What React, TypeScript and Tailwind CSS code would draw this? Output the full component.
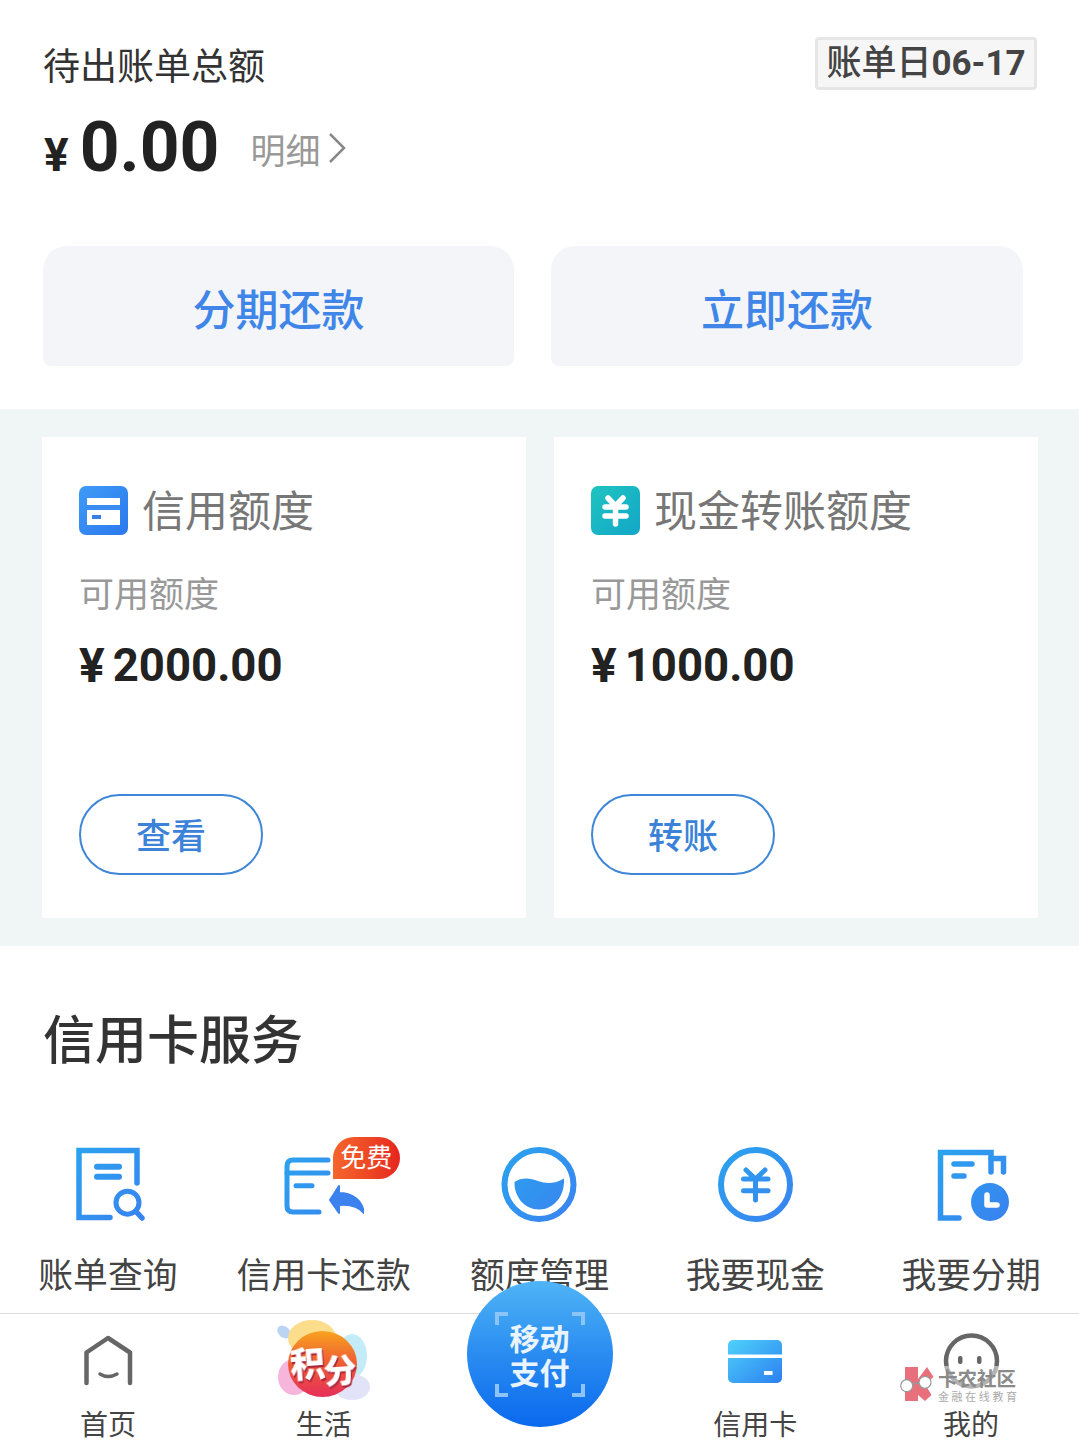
import type { ReactNode } from "react";

const NUM_FONT = "font-['Roboto','Noto_Sans_CJK_SC',sans-serif]";

function BlueGrad({ id }: { id: string }) {
  return (
    <defs>
      <linearGradient id={id} gradientUnits="userSpaceOnUse" x1="0" y1="0" x2="80" y2="80">
        <stop offset="0" stopColor="#2aa5ee" />
        <stop offset="1" stopColor="#3a80f0" />
      </linearGradient>
    </defs>
  );
}

function BillIcon() {
  return (
    <svg width="80" height="80" viewBox="0 0 80 80" fill="none">
      <BlueGrad id="g1" />
      <g stroke="url(#g1)" strokeWidth="5.5">
        <path d="M42 71.5H11V4.5H69V37" strokeLinecap="round" />
        <path d="M29 20.7H51M29 30.7H51" strokeWidth="6" strokeLinecap="round" />
        <circle cx="59.5" cy="56.7" r="11.5" strokeWidth="5" />
        <path d="M68 65.5L74 72" strokeLinecap="round" />
      </g>
    </svg>
  );
}

function RepayIcon() {
  return (
    <svg width="80" height="80" viewBox="0 0 80 80" fill="none">
      <BlueGrad id="g2" />
      <g stroke="url(#g2)" strokeWidth="5" strokeLinecap="round">
        <path d="M44 14H9Q3 14 3 20V60Q3 66 9 66H35" />
        <path d="M3 27H44" />
        <path d="M12 39.7H28" />
      </g>
      <path
        d="M46 54L55 40V47C68 47 78 54 80 67C74 60 66 58 55 59V67Z"
        fill="#3b82ee"
        stroke="#3b82ee"
        strokeWidth="2"
        strokeLinejoin="round"
      />
    </svg>
  );
}

function WaterIcon() {
  return (
    <svg width="80" height="80" viewBox="0 0 80 80" fill="none">
      <BlueGrad id="g3" />
      <circle cx="40" cy="38.5" r="34.5" stroke="url(#g3)" strokeWidth="6" />
      <path
        d="M15.5 36C23 31 31 32 39 35S56 38 65 32.5C66 50 55 63.5 40 63.5C26 63.5 15 51 15.5 36Z"
        fill="url(#g3)"
      />
    </svg>
  );
}

function CashIcon() {
  return (
    <svg width="80" height="80" viewBox="0 0 80 80" fill="none">
      <BlueGrad id="g4" />
      <circle cx="40.5" cy="38.5" r="34.5" stroke="url(#g4)" strokeWidth="6" />
      <path
        d="M31 24L40.5 33L50 24M28.5 33H53M28.5 44.7H53M40.5 33V54"
        stroke="url(#g4)"
        strokeWidth="5"
        strokeLinecap="round"
        strokeLinejoin="round"
      />
    </svg>
  );
}

function InstalmentIcon() {
  return (
    <svg width="80" height="80" viewBox="0 0 80 80" fill="none">
      <BlueGrad id="g5" />
      <g stroke="url(#g5)" strokeWidth="5.5" strokeLinecap="round">
        <path d="M28 72H9.5V6.5H60V26" />
        <path d="M60 12.5H72.5V26" />
        <path d="M23 18H41M23 30H33" />
      </g>
      <circle cx="59" cy="56" r="19" fill="url(#g5)" />
      <path d="M56 49V59H66" stroke="#fff" strokeWidth="5.5" strokeLinejoin="round" strokeLinecap="round" />
    </svg>
  );
}

function HomeIcon() {
  return (
    <svg width="60" height="60" viewBox="0 0 60 60" fill="none">
      <path
        d="M8.5 50V19.5L30 5L52 19.5V50"
        stroke="#666"
        strokeWidth="4.5"
        strokeLinecap="round"
        strokeLinejoin="round"
      />
      <path d="M22 41Q30 46 39 41" stroke="#666" strokeWidth="3.5" strokeLinecap="round" />
    </svg>
  );
}

function PointsIcon() {
  return (
    <svg className="overflow-visible" width="92" height="80" viewBox="0 0 92 80" fill="none">
      <defs>
        <linearGradient id="pts" x1="0.5" y1="0" x2="0.5" y2="1">
          <stop offset="0" stopColor="#f8a31f" />
          <stop offset="0.5" stopColor="#ef5a35" />
          <stop offset="1" stopColor="#e62f5a" />
        </linearGradient>
      </defs>
      <ellipse cx="6" cy="9" rx="7.5" ry="5.5" fill="#bcd4f4" transform="rotate(40 6 9)" />
      <ellipse cx="34" cy="15" rx="24" ry="18" fill="#fbdd8c" />
      <ellipse cx="74" cy="33" rx="15" ry="22" fill="#c4ecf8" />
      <ellipse cx="16" cy="54" rx="16" ry="18" fill="#f6b6dc" />
      <ellipse cx="74" cy="64" rx="18" ry="13" fill="#e2e2f8" />
      <ellipse cx="44.5" cy="41" rx="34.5" ry="33" fill="url(#pts)" />
      <text
        x="12"
        y="53"
        fill="#fff"
        fontSize="35"
        fontWeight="900"
        fontFamily="'Noto Sans CJK SC',sans-serif"
        transform="rotate(-4 44 40)"
        className="drop-shadow-[1px_2px_0_#a8243a]"
      >
        积
      </text>
      <text
        x="45"
        y="61"
        fill="#fff"
        fontSize="33"
        fontWeight="900"
        fontFamily="'Noto Sans CJK SC',sans-serif"
        transform="rotate(-4 44 40)"
        className="drop-shadow-[1px_2px_0_#a8243a]"
      >
        分
      </text>
    </svg>
  );
}

function CardIcon() {
  return (
    <svg width="60" height="60" viewBox="0 0 60 60" fill="none">
      <defs>
        <linearGradient id="cardg" x1="0" y1="0" x2="1" y2="1">
          <stop offset="0" stopColor="#4fd2fb" />
          <stop offset="1" stopColor="#2b7ff0" />
        </linearGradient>
      </defs>
      <rect x="3" y="7" width="54" height="43" rx="5" fill="url(#cardg)" />
      <rect x="3" y="21.5" width="54" height="3.5" fill="#fff" />
      <rect x="39" y="38" width="8.5" height="4" fill="#fff" />
    </svg>
  );
}

function MineIcon() {
  return (
    <svg width="60" height="60" viewBox="0 0 60 60" fill="none">
      <circle cx="30.5" cy="28" r="25.5" stroke="#666" strokeWidth="4.5" />
      <rect x="17" y="23" width="4.5" height="8" rx="2" fill="#666" />
      <rect x="36" y="23" width="4.5" height="8" rx="2" fill="#666" />
    </svg>
  );
}

function Service({ label, icon, badge }: { label: string; icon: ReactNode; badge?: boolean }) {
  return (
    <div className="flex flex-col items-center">
      <div className="relative h-[80px] w-[80px]">
        {icon}
        {badge && (
          <span className="absolute left-[49px] top-[-9px] flex h-[42px] w-[67px] items-center justify-center rounded-[21px] rounded-bl-none bg-gradient-to-r from-[#f5652c] to-[#e6231f] pb-[4px] text-[26px] leading-none text-white">
            免费
          </span>
        )}
      </div>
      <span className="mt-[22px] whitespace-nowrap text-[34.8px] leading-[50px] text-[#444]">{label}</span>
    </div>
  );
}

function NavItem({ label, icon }: { label: string; icon: ReactNode }) {
  return (
    <div className="flex flex-col items-center pt-[19px]">
      <div className="flex h-[60px] items-center justify-center">{icon}</div>
      <span className="mt-[10px] text-[28px] leading-[40px] text-[#444]">{label}</span>
    </div>
  );
}

function LimitCard({
  title,
  icon,
  amount,
  action,
}: {
  title: string;
  icon: ReactNode;
  amount: string;
  action: string;
}) {
  return (
    <div className="bg-white pl-[37px] pt-[49px]">
      <div className="flex h-[49px] items-center gap-[14px]">
        {icon}
        <span className="pb-[4px] text-[43px] leading-none text-[#777]">{title}</span>
      </div>
      <p className="mt-[32px] text-[35px] leading-[50px] text-[#999]">可用额度</p>
      <p className={`${NUM_FONT} mt-[24px] flex h-[50px] items-center gap-[8px] font-bold text-[#222]`}>
        <span className="text-[48px] leading-none">¥</span>
        <span className="text-[45.5px] leading-none">{amount}</span>
      </p>
      <button className="mt-[103px] flex h-[81px] w-[184px] items-center justify-center rounded-full border-2 border-[#3f86d8] text-[35px] font-medium text-[#3b82d8]">
        {action}
      </button>
    </div>
  );
}

function Corner({ className }: { className: string }) {
  return <span className={`absolute h-[13px] w-[13px] border-[#8cc4f8] ${className}`} />;
}

export default function App() {
  return (
    <div className="relative flex h-[1454px] w-[1079px] flex-col overflow-hidden bg-white font-['Noto_Sans_CJK_SC',sans-serif]">
      <section className="h-[409px] shrink-0 pl-[43px] pr-[42px] pt-[37px]">
        <div className="flex items-start justify-between">
          <span className="mt-[2px] text-[37px] leading-[50px] text-[#333]">待出账单总额</span>
          <span
            className={`${NUM_FONT} flex h-[53px] w-[222px] items-center justify-center rounded-[4px] border-[3px] border-[#e6e6e6] bg-[#f6f6f6] text-[35px] font-medium leading-none text-[#444]`}
          >
            账单日<span className="font-bold">06-17</span>
          </span>
        </div>
        <div className="mt-[13px] flex h-[90px] items-center">
          <span className={`${NUM_FONT} ml-px flex items-baseline gap-[11px] font-bold text-[#222]`}>
            <span className="text-[46px] leading-none">¥</span>
            <span className="text-[69.5px] leading-none">0.00</span>
          </span>
          <span className="ml-[31px] text-[35px] leading-none text-[#999]">明细</span>
          <svg className="ml-[8px]" width="18" height="32" viewBox="0 0 18 32" fill="none">
            <path d="M2 2L16 16L2 30" stroke="#888" strokeWidth="2.5" />
          </svg>
        </div>
        <div className="mt-[53px] flex gap-[37px]">
          <button className="h-[120px] w-[471px] rounded-t-[24px] rounded-b-[8px] bg-[#f4f5f8] pt-[3px] text-[43px] font-medium text-[#3f86e8]">
            分期还款
          </button>
          <button className="h-[120px] w-[472px] rounded-t-[24px] rounded-b-[8px] bg-[#f4f5f8] pt-[3px] text-[43px] font-medium text-[#3f86e8]">
            立即还款
          </button>
        </div>
      </section>

      <section className="grid h-[537px] shrink-0 grid-cols-2 gap-[28px] bg-[#f0f5f5] pl-[42px] pr-[41px] py-[28px]">
        <LimitCard
          title="信用额度"
          amount="2000.00"
          action="查看"
          icon={
            <svg width="49" height="49" viewBox="0 0 49 49" fill="none">
              <defs>
                <linearGradient id="lim1" x1="0" y1="0" x2="1" y2="1">
                  <stop offset="0" stopColor="#3f9bf6" />
                  <stop offset="1" stopColor="#2b78ee" />
                </linearGradient>
              </defs>
              <rect width="49" height="49" rx="7" fill="url(#lim1)" />
              <rect x="8" y="12" width="33" height="27" fill="#fff" />
              <rect x="8" y="19" width="33" height="5" fill="#3a8cf2" />
              <rect x="13" y="29" width="9" height="4" fill="#3a7fe8" />
            </svg>
          }
        />
        <LimitCard
          title="现金转账额度"
          amount="1000.00"
          action="转账"
          icon={
            <svg width="49" height="49" viewBox="0 0 49 49" fill="none">
              <defs>
                <linearGradient id="lim2" x1="0" y1="0" x2="1" y2="1">
                  <stop offset="0" stopColor="#1fc4c0" />
                  <stop offset="1" stopColor="#12a6c8" />
                </linearGradient>
              </defs>
              <rect width="49" height="49" rx="7" fill="url(#lim2)" />
              <path
                d="M17 12L24.5 20L32 12M14 21H35M14 30H35M24.5 20V38"
                stroke="#fff"
                strokeWidth="5.5"
                strokeLinecap="round"
                strokeLinejoin="round"
              />
            </svg>
          }
        />
      </section>

      <section className="h-[367px] shrink-0 pt-[61px]">
        <h2 className="ml-[43px] h-[60px] text-[52px] font-medium leading-[60px] text-[#333]">信用卡服务</h2>
        <div className="mt-[79px] grid grid-cols-5">
          <Service label="账单查询" icon={<BillIcon />} />
          <Service label="信用卡还款" icon={<RepayIcon />} badge />
          <Service label="额度管理" icon={<WaterIcon />} />
          <Service label="我要现金" icon={<CashIcon />} />
          <Service label="我要分期" icon={<InstalmentIcon />} />
        </div>
      </section>

      <nav className="grid h-[141px] shrink-0 grid-cols-5 border-t border-[#dcdcdc] bg-white">
        <NavItem label="首页" icon={<HomeIcon />} />
        <NavItem label="生活" icon={<PointsIcon />} />
        <div className="relative">
          <div className="absolute left-[35px] top-[-33px] flex h-[146px] w-[146px] flex-col items-center justify-center rounded-full bg-gradient-to-b from-[#4fb4f6] via-[#2a8cf0] to-[#0a68ee] text-[30px] font-bold leading-[34px] text-[#eaf4fe]">
            <span>移动</span>
            <span>支付</span>
            <Corner className="left-[28px] top-[31px] border-l-[4px] border-t-[4px]" />
            <Corner className="right-[28px] top-[31px] border-r-[4px] border-t-[4px]" />
            <Corner className="bottom-[30px] left-[28px] border-b-[4px] border-l-[4px]" />
            <Corner className="bottom-[30px] right-[28px] border-b-[4px] border-r-[4px]" />
          </div>
        </div>
        <NavItem label="信用卡" icon={<CardIcon />} />
        <NavItem label="我的" icon={<MineIcon />} />
      </nav>

      <div className="absolute left-[900px] top-[1365px] flex items-center gap-[4px]">
        <svg width="34" height="38" viewBox="0 0 34 38" fill="none">
          <path d="M5 2H18V14L27 2L33.5 12L25 19L31.5 30L25 36L18 30V36H5Z" fill="#e8707c" />
          <path d="M12 19L19 18" stroke="#999" strokeWidth="1.5" />
          <circle cx="6.7" cy="20.7" r="6" fill="#fff" stroke="#999" strokeWidth="1.2" />
          <circle cx="25" cy="17.3" r="6" fill="#fff" stroke="#999" strokeWidth="1.2" />
        </svg>
        <div className="flex w-[80px] flex-col bg-white/50">
          <span className="whitespace-nowrap text-[19.5px] font-bold leading-[24px] text-[#8a8a8a]">卡农社区</span>
          <span className="whitespace-nowrap text-[11px] leading-[13px] tracking-[2.6px] text-[#aaa]">金融在线教育</span>
        </div>
      </div>
    </div>
  );
}
